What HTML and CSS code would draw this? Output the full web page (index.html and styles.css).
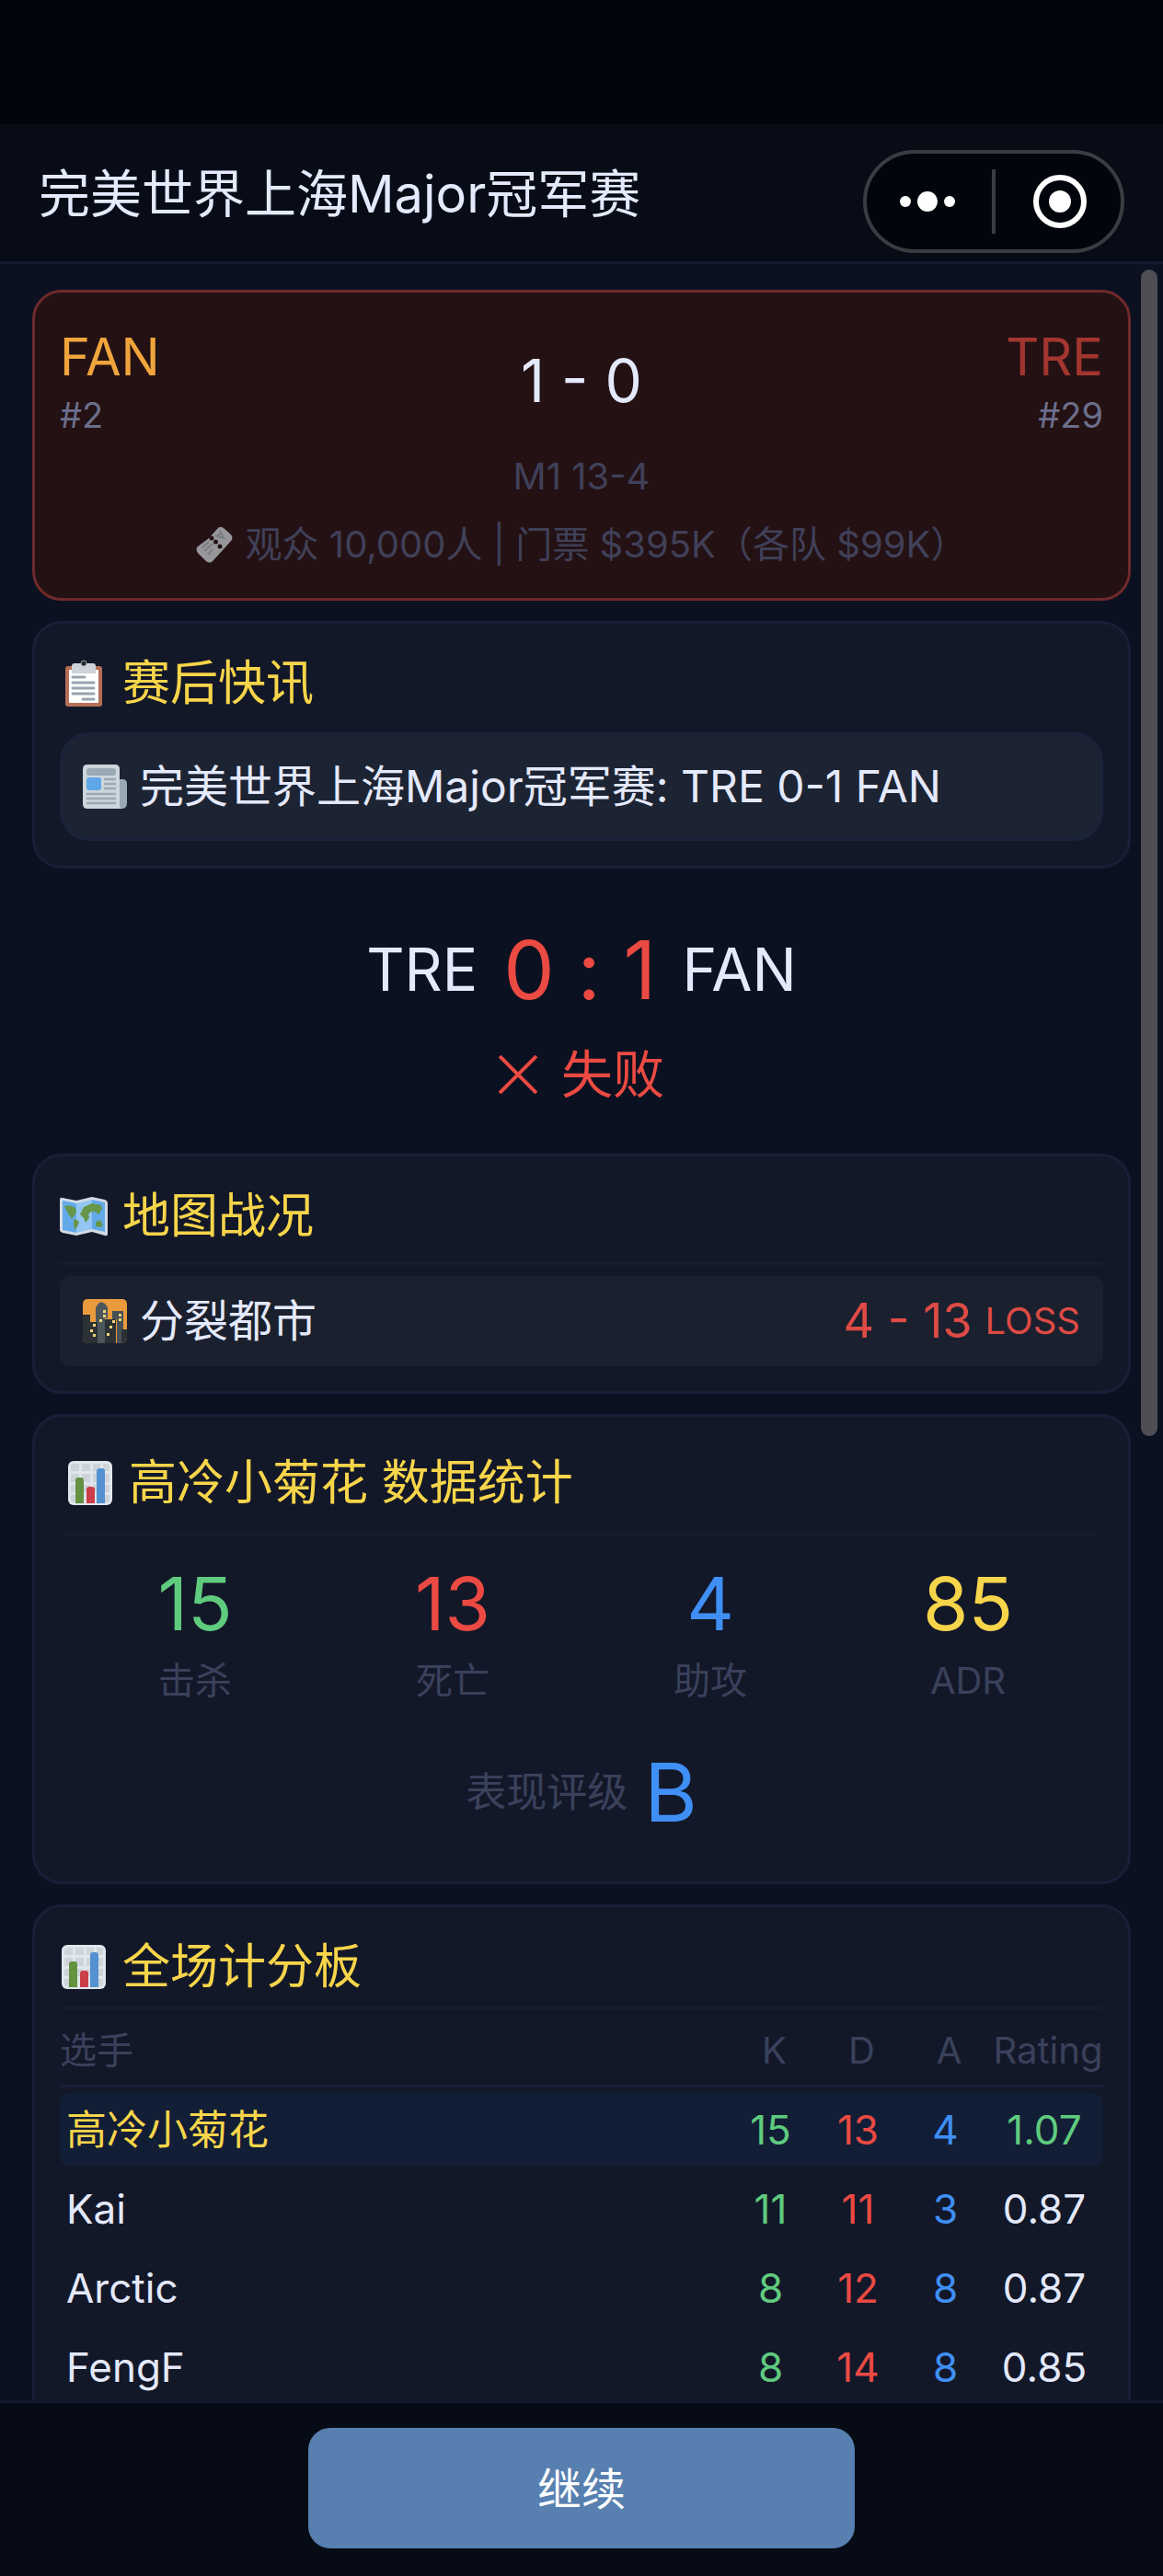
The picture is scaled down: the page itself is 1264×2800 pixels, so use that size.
FILE: index.html
```html
<!DOCTYPE html>
<html lang="zh-CN">
<head>
    <meta charset="UTF-8">
    <meta name="viewport" content="width=device-width, initial-scale=1.0">
    <title>完美世界上海Major冠军赛</title>
    <link rel="stylesheet" href="styles.css">
</head>
<body>
    <svg class="defs" aria-hidden="true">
        <symbol id="icon-chart" viewBox="0 0 48 48">
            <rect width="48" height="48" rx="6" fill="#e1e6ec"/>
            <path fill="#cdd4da" d="M6 3h6v8H3V6q0-3 3-3zM15 3h9v8h-9zM27 3h8v8h-8zM38 3h4q3 0 3 3v5h-7zM3 14h9v9H3zM15 14h9v9h-9zM27 14h8v9h-8zM38 14h7v9h-7zM3 26h9v8H3zM15 26h9v8h-9zM27 26h8v8h-8zM38 26h7v8h-7zM3 37h9v8H6q-3 0-3-3zM38 37h7v5q0 3-3 3h-4z"/>
            <path fill="#64913f" d="M8 46V21q0-3 3-3h3q3 0 3 3v25z"/>
            <path fill="#cc3e49" d="M20 46V31q0-3 3-3h3q3 0 3 3v15z"/>
            <path fill="#5391d1" d="M31 46V11q0-3 3-3h3q3 0 3 3v35z"/>
        </symbol>
    </svg>

    <div class="status-bar"></div>
    <header class="header">
        <h1 class="header-title">完美世界上海Major冠军赛</h1>
        <div class="capsule">
            <button type="button" class="capsule-btn" aria-label="更多">
                <svg width="64" height="64" viewBox="0 0 64 64" fill="#fff">
                    <circle cx="8" cy="32" r="6"/>
                    <circle cx="32" cy="32" r="11"/>
                    <circle cx="56" cy="32" r="6"/>
                </svg>
            </button>
            <span class="capsule-line"></span>
            <button type="button" class="capsule-btn" aria-label="关闭">
                <svg width="64" height="64" viewBox="0 0 64 64">
                    <circle cx="32" cy="32" r="26" fill="none" stroke="#fff" stroke-width="6"/>
                    <circle cx="32" cy="32" r="12" fill="#fff"/>
                </svg>
            </button>
        </div>
    </header>

    <main class="content">
        <div class="scroll-area">
            <section class="card match-card">
                <div class="match-row">
                    <div class="team">
                        <div class="team-name win">FAN</div>
                        <div class="team-rank">#2</div>
                    </div>
                    <div class="match-score">1 - 0</div>
                    <div class="team right">
                        <div class="team-name lose">TRE</div>
                        <div class="team-rank">#29</div>
                    </div>
                </div>
                <div class="match-maps">M1 13-4</div>
                <div class="match-info">
                    <svg class="ticket" width="40" height="40" viewBox="0 0 40 40">
                        <path fill="#97979b" d="M14 13 23 3q3-4 7-1l8 7q3 4 0 7l-9 10-11 12q-3 3-7 0l-9-9q-3-4 0-7z"/>
                        <g fill="#231114"><circle cx="17" cy="13" r="2.5"/><circle cx="21.5" cy="17" r="2.5"/><circle cx="26" cy="22" r="2.5"/></g>
                        <path fill="none" stroke="#7b7c84" stroke-width="2" d="m6 24 8-7M9 27l9-8M13 31l5-6M21 10l9 3-4-8M23 11l4-4"/>
                    </svg>
                    <span>观众 10,000人 | 门票 $395K（各队 $99K）</span>
                </div>
            </section>

            <section class="card">
                <h2 class="card-title plain">
                    <svg class="icon-lg" viewBox="0 0 52 52">
                        <rect x="6" y="7" width="40" height="44" rx="3" fill="#b56f57"/>
                        <path fill="#fff" d="M10 11h32v36H10z"/>
                        <path fill="#cdd3d9" d="M13 15V7q0-3 3-3h20q3 0 3 3v8z"/>
                        <circle cx="26" cy="4" r="3" fill="#26292e" stroke="#9aa1a8" stroke-width="1"/>
                        <path stroke="#98a5b0" stroke-width="3" stroke-linecap="round" d="M14 19h13M14 25h23M14 31h23M14 37h23M25 43h12"/>
                    </svg>
                    赛后快讯
                </h2>
                <div class="news">
                    <svg class="icon-md" viewBox="0 0 48 48">
                        <path fill="#9aa9b4" d="M38 16h5q5 0 5 5v21q0 6-6 6h-6z"/>
                        <path fill="#cdd6dc" d="M5 0h30q5 0 5 5v38q0 5 3 5H5q-5 0-5-5V5q0-5 5-5z"/>
                        <rect x="4" y="4" width="32" height="8" rx="3" fill="#9aa9b4"/>
                        <rect x="4" y="14" width="16" height="14" rx="3" fill="#5fa6e8"/>
                        <path stroke="#9aa9b4" stroke-width="2.5" stroke-linecap="round" d="M24 16h11M24 21h11M24 26h11M5 32h30M5 37h30M5 42h30"/>
                    </svg>
                    完美世界上海Major冠军赛: TRE 0-1 FAN
                </div>
            </section>

            <section class="result">
                <div class="result-row">
                    <span class="result-team">TRE</span>
                    <span class="result-score">0 : 1</span>
                    <span class="result-team">FAN</span>
                </div>
                <div class="result-text">
                    <svg width="42" height="42" viewBox="0 0 42 42">
                        <path stroke="#eb4a43" stroke-width="4" d="m1 1 40 40M41 1 1 41"/>
                    </svg>
                    失败
                </div>
            </section>

            <section class="card">
                <h2 class="card-title">
                    <svg class="icon-lg" viewBox="0 0 52 52">
                        <path fill="#d3dae2" d="M3 6q-3-1-3 2v33q0 2 3 3l15 3 17-4 14 4q3 1 3-2V12q0-3-3-4L35 5 18 9z"/>
                        <path fill="#62a9ea" d="m3 9 15 3v32L3 41z"/>
                        <path fill="#94c6f3" d="m18 12 17-4v32l-17 4z"/>
                        <path fill="#62a9ea" d="m35 8 14 3v32l-14-3z"/>
                        <path fill="#67964a" d="M5 15q6-2 12 2l1 5-5 7-4-6zM15 29q6 1 6 4l-4 8-2-5zM22 24l4-8 9-4v8l-4 4 1 4-4 5-2-5zM35 12l10 2 1 4-4 6-5-4-2 3zM39 32l5-2 3 6-3 2-5-1z"/>
                    </svg>
                    地图战况
                </h2>
                <div class="map-row">
                    <svg class="icon-md" viewBox="0 0 48 48">
                        <rect width="48" height="48" rx="5" fill="#e99a3c"/>
                        <path fill="#2b3134" d="M0 17h8v8h8v23H5q-5 0-5-5zM24 22h12v26H24zM42 33h6v10q0 5-5 5h-1z"/>
                        <path fill="#4c575c" d="M14 9l3-4 3-2 4 2 3 4v12h-3v27h-8V25h-2z"/>
                        <path fill="#465055" d="M32 13h12v20h-2v15h-5V22h-5z"/>
                        <path fill="#f2d67a" d="M22 12h3v3h-3zM22 17h3v3h-3zM18 22h3v3h-3zM39 16h3v3h-3zM39 21h3v3h-3zM32 23h3v3h-3zM29 29h3v3h-3zM26 37h3v3h-3zM11 27h3v3h-3zM8 33h3v3H8zM11 38h3v3h-3z"/>
                    </svg>
                    <span class="map-name">分裂都市</span>
                    <span class="map-score">4 - 13</span>
                    <span class="map-result">LOSS</span>
                </div>
            </section>

            <section class="card stats-card">
                <h2 class="card-title">
                    <svg class="icon-lg"><use href="#icon-chart" x="2" y="2" width="48" height="48"/></svg>
                    高冷小菊花 数据统计
                </h2>
                <div class="stats">
                    <div class="stat"><div class="stat-num green">15</div><div class="stat-label">击杀</div></div>
                    <div class="stat"><div class="stat-num red">13</div><div class="stat-label">死亡</div></div>
                    <div class="stat"><div class="stat-num blue">4</div><div class="stat-label">助攻</div></div>
                    <div class="stat"><div class="stat-num yellow">85</div><div class="stat-label">ADR</div></div>
                </div>
                <div class="grade">
                    <span class="grade-label">表现评级</span>
                    <span class="grade-value blue">B</span>
                </div>
            </section>

            <section class="card">
                <h2 class="card-title tight">
                    <svg class="icon-lg"><use href="#icon-chart" x="2" y="2" width="48" height="48"/></svg>
                    全场计分板
                </h2>
                <table class="scoreboard">
                    <thead>
                        <tr><th>选手</th><th>K</th><th>D</th><th>A</th><th>Rating</th></tr>
                    </thead>
                    <tbody>
                        <tr class="me"><td>高冷小菊花</td><td class="green">15</td><td class="red">13</td><td class="blue">4</td><td class="green">1.07</td></tr>
                        <tr><td>Kai</td><td class="green">11</td><td class="red">11</td><td class="blue">3</td><td>0.87</td></tr>
                        <tr><td>Arctic</td><td class="green">8</td><td class="red">12</td><td class="blue">8</td><td>0.87</td></tr>
                        <tr><td>FengF</td><td class="green">8</td><td class="red">14</td><td class="blue">8</td><td>0.85</td></tr>
                    </tbody>
                </table>
            </section>
        </div>
        <div class="scroll-thumb"></div>
    </main>

    <footer class="footer">
        <button type="button" class="continue-btn">继续</button>
    </footer>
</body>
</html>
```

FILE: styles.css
```css
* {
    box-sizing: border-box;
}
body {
    margin: 0;
    height: 100vh;
    display: flex;
    flex-direction: column;
    background-color: #0b1120;
    color: #e4e9fb;
    font-family: Inter, "Noto Sans CJK SC", sans-serif;
    font-size: 48px;
}
h1, h2 {
    margin: 0;
    font-weight: 400;
}
svg {
    flex: none;
}
.defs {
    position: absolute;
    width: 0;
    height: 0;
}
.green { color: #5fcb7e; }
.red { color: #eb4a43; }
.blue { color: #3f8ff5; }
.yellow { color: #f7d54a; }

/* top bar */
.status-bar {
    flex: none;
    height: 135px;
    background: #02050c;
}
.header {
    flex: none;
    display: flex;
    align-items: flex-start;
    justify-content: space-between;
    padding: 28px 42px 9px;
    background: #070c17;
    border-bottom: 3px solid #141a2e;
}
.header-title {
    font-size: 56px;
    line-height: 96px;
}
.capsule {
    display: flex;
    align-items: center;
    justify-content: space-between;
    width: 284px;
    height: 112px;
    padding: 0 34px;
    background: #02050c;
    border: 4px solid #3a3c42;
    border-radius: 56px;
}
.capsule-btn {
    display: flex;
    padding: 0;
    border: none;
    background: none;
    cursor: pointer;
}
.capsule-line {
    width: 4px;
    height: 70px;
    background: #3a3c42;
}

/* scrolling part */
.content {
    position: relative;
    flex: 1;
    min-height: 0;
}
.scroll-area {
    height: 100%;
    padding: 28px 35px;
    overflow-y: auto;
    scrollbar-width: none;
    display: flex;
    flex-direction: column;
    gap: 22px;
}
.scroll-thumb {
    position: absolute;
    top: 6px;
    right: 6px;
    width: 18px;
    height: 54.6%;
    border-radius: 9px;
    background: #4d4f55;
}
.card {
    flex: none;
    padding: 27px;
    background: #131829;
    border: 3px solid #191f37;
    border-radius: 32px;
}
.card-title {
    display: flex;
    align-items: center;
    gap: 16px;
    font-size: 52px;
    line-height: 76px;
    color: #f7d54a;
    padding-bottom: 12px;
    border-bottom: 3px solid #171c2e;
    margin-bottom: 12px;
}
.card-title.plain {
    padding-bottom: 0;
    border-bottom: none;
    margin-bottom: 15px;
}
.card-title.tight {
    padding-bottom: 5px;
    margin-bottom: 0;
}
.icon-lg {
    width: 52px;
    height: 52px;
}
.icon-md {
    width: 48px;
    height: 48px;
}

/* match summary */
.match-card {
    padding: 32px 27px;
    background: #231114;
    border-color: #6f2a2b;
}
.match-row {
    display: grid;
    grid-template-columns: 1fr auto 1fr;
    align-items: center;
}
.team.right {
    text-align: right;
}
.team-name {
    font-size: 56px;
    line-height: 76px;
}
.team-name.win { color: #f0a43c; }
.team-name.lose { color: #a3352f; }
.team-rank {
    font-size: 38px;
    line-height: 50px;
    color: #6b6f8b;
}
.match-score {
    font-size: 64px;
}
.match-maps, .match-info {
    margin-top: 16px;
    font-size: 40px;
    line-height: 52px;
    text-align: center;
    color: #404058;
}
.match-info {
    margin-top: 22px;
    display: flex;
    align-items: center;
    justify-content: center;
    gap: 14px;
}

.news {
    display: flex;
    align-items: center;
    gap: 14px;
    padding: 21px 22px;
    line-height: 70px;
    background: #1c2433;
    border: 3px solid #1a233a;
    border-radius: 32px;
}

/* final result */
.result {
    flex: none;
    padding: 30px 0 26px;
}
.result-row {
    display: flex;
    align-items: center;
    justify-content: center;
    gap: 28px;
    line-height: 116px;
}
.result-team {
    font-size: 64px;
}
.result-score {
    font-size: 88px;
    font-feature-settings: "calt" 0;
    color: #eb4a43;
}
.result-text {
    display: flex;
    align-items: center;
    justify-content: center;
    gap: 26px;
    margin-top: 18px;
    font-size: 56px;
    line-height: 76px;
    color: #eb4a43;
}

.map-row {
    display: flex;
    align-items: center;
    gap: 14px;
    padding: 14px 25px;
    line-height: 70px;
    background: #1b202e;
    border-radius: 12px;
}
.map-name {
    flex: 1;
}
.map-score {
    font-size: 52px;
    color: #de4a45;
}
.map-result {
    font-size: 40px;
    color: #de4a45;
}

/* player stats */
.stats-card {
    padding: 34px;
}
.stats-card .card-title {
    padding-bottom: 16px;
    margin-bottom: 16px;
}
.stats {
    display: grid;
    grid-template-columns: repeat(4, 1fr);
    text-align: center;
}
.stat-num {
    font-size: 80px;
    line-height: 116px;
}
.stat-label {
    font-size: 40px;
    line-height: 52px;
    color: #3a415b;
}
.grade {
    display: flex;
    align-items: center;
    justify-content: center;
    gap: 18px;
    margin-top: 32px;
    line-height: 126px;
}
.grade-label {
    font-size: 44px;
    color: #3a415b;
}
.grade-value {
    font-size: 88px;
}

/* scoreboard */
.scoreboard {
    width: 100%;
    table-layout: fixed;
    border-collapse: separate;
    border-spacing: 0 6px;
    font-size: 44px;
    line-height: 56px;
    text-align: center;
}
.scoreboard th {
    width: 95px;
    padding: 14px 0 12px;
    font-size: 40px;
    line-height: 50px;
    font-weight: 400;
    color: #3a415b;
    border-bottom: 3px solid #191f37;
}
.scoreboard td {
    padding: 12px 8px 12px 0;
}
.scoreboard th:first-child {
    width: auto;
    text-align: left;
}
.scoreboard th:last-child {
    width: 120px;
}
.scoreboard td:first-child {
    padding-left: 7px;
    text-align: left;
    border-radius: 12px 0 0 12px;
}
.scoreboard td:last-child {
    border-radius: 0 12px 12px 0;
}
.scoreboard .me td {
    background: #121e36;
}
.scoreboard .me td:first-child {
    color: #f7d54a;
}

.footer {
    flex: none;
    display: flex;
    justify-content: center;
    padding: 27px 0 30px;
    background: #070b15;
    border-top: 3px solid #141a2e;
}
.continue-btn {
    width: 47%;
    height: 131px;
    padding: 0 0 6px;
    border: none;
    border-radius: 24px;
    background: #5780b0;
    color: #fff;
    font-family: inherit;
    font-size: 48px;
    cursor: pointer;
}
```
